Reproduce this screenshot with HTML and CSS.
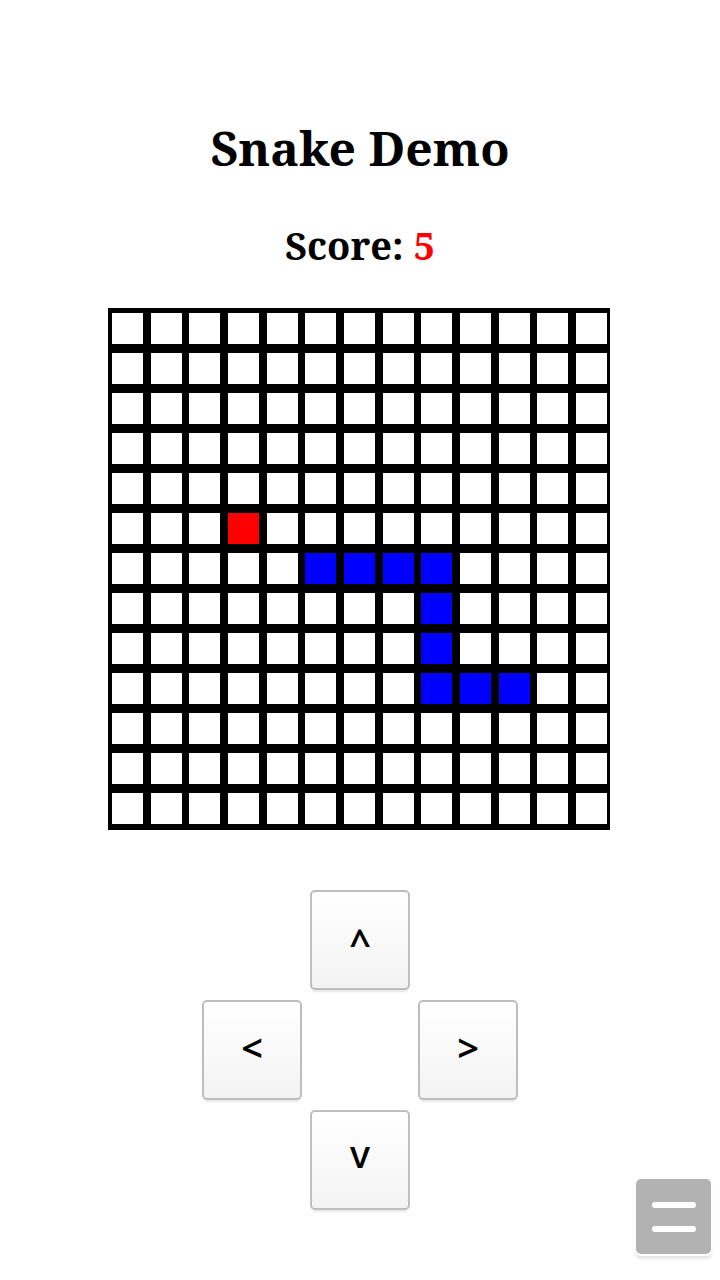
FILE: index.html
```html
<!DOCTYPE html>
<html lang="en">
<head>
<meta charset="utf-8">
<meta name="viewport" content="width=device-width, initial-scale=1">
<title>Snake Demo</title>
<link rel="stylesheet" href="styles.css">
</head>
<body>
<main class="game">
  <h1 class="title">Snake Demo</h1>
  <h2 class="score">Score: <span class="score-value">5</span></h2>
  <div class="board" id="board" role="img" aria-label="Snake board"></div>
  <div class="pad">
    <button class="key key-up" type="button" aria-label="Up">^</button>
    <button class="key key-left" type="button" aria-label="Left">&lt;</button>
    <button class="key key-right" type="button" aria-label="Right">&gt;</button>
    <button class="key key-down" type="button" aria-label="Down">v</button>
  </div>
</main>
<button class="menu" type="button" aria-label="Menu">
  <svg class="menu-icon" viewBox="0 0 44 30" aria-hidden="true"><path d="M3 3H41M3 27H41"/></svg>
</button>
<script src="game.js"></script>
</body>
</html>
```
FILE: styles.css
```css
body {
  margin: 0;
  min-height: 100vh;
  background: #fff;
  color: #000;
  font-family: "Noto Serif", "Droid Serif", "DejaVu Serif", serif;
}
.game {
  display: flex;
  flex-direction: column;
  align-items: center;
  padding: 116px 16px 70px;
}
.title {
  margin: 0 0 36px;
  font-size: 48px;
  line-height: 64px;
}
.score {
  margin: 0 0 34px;
  font-size: 38px;
  line-height: 58px;
}
.score-value {
  color: #f00;
}
.board {
  box-sizing: border-box;
  display: grid;
  grid-template-columns: repeat(13, 31px);
  grid-auto-rows: 31px;
  justify-content: space-between;
  row-gap: 9px;
  width: 100%;
  max-width: 502px;
  margin-right: 2px;
  padding: 5px 3px 6px 4px;
  background: #000;
}
.cell {
  background: #fff;
}
.cell-food {
  background: #f00;
}
.cell-snake {
  background: #00f;
}
.pad {
  display: grid;
  grid-template-columns: repeat(3, 100px);
  grid-template-rows: repeat(3, 100px);
  gap: 10px 8px;
  margin-top: 60px;
}
.key {
  padding: 0 0 6px;
  border: 2px solid #bebebe;
  border-radius: 5px;
  background: linear-gradient(#fff, #f3f3f3);
  box-shadow: 0 4px 2px -2px #e8e8e8;
  color: #000;
  font: 600 38px "Noto Sans", sans-serif;
}
.key-up {
  grid-area: 1 / 2;
  padding: 4px 0 0;
}
.key-left { grid-area: 2 / 1; }
.key-right { grid-area: 2 / 3; }
.key-down {
  grid-area: 3 / 2;
  padding: 0 0 14px;
  font-weight: 500;
}
.menu {
  position: fixed;
  right: 9px;
  bottom: 26px;
  display: grid;
  place-items: center;
  width: 75px;
  height: 75px;
  padding: 0;
  border: 0;
  border-radius: 5px;
  background: #b2b2b2;
  box-shadow: 0 0 0 2px #fff, 0 4px 3px 1px #e4e4e4;
}
.menu-icon {
  width: 44px;
  fill: none;
  stroke: #fff;
  stroke-width: 6;
  stroke-linecap: round;
}
```
FILE: game.js
```js
const size = 13;
const food = "3,5";
const snake = ["5,6", "6,6", "7,6", "8,6", "8,7", "8,8", "8,9", "9,9", "10,9"];
const board = document.getElementById("board");

for (let y = 0; y < size; y++) {
  for (let x = 0; x < size; x++) {
    const cell = document.createElement("div");
    const key = x + "," + y;
    cell.className = "cell";
    if (key === food) cell.classList.add("cell-food");
    if (snake.includes(key)) cell.classList.add("cell-snake");
    board.append(cell);
  }
}
```
